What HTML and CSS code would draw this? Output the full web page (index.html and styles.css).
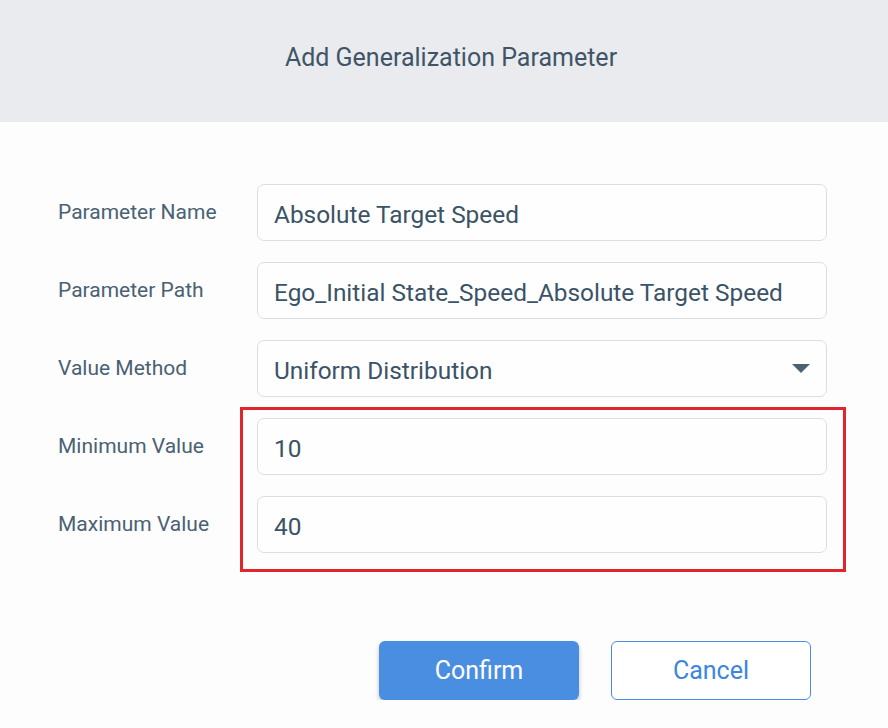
FILE: index.html
```html
<!DOCTYPE html>
<html lang="en">
<head>
  <meta charset="UTF-8">
  <meta name="viewport" content="width=device-width, initial-scale=1.0">
  <title>Add Generalization Parameter</title>
  <link rel="stylesheet" href="styles.css">
</head>
<body>

<div class="dialog">
  <header class="dialog-header">
    <h1>Add Generalization Parameter</h1>
  </header>

  <form class="param-form">
    <div class="row">
      <label for="paramName">Parameter Name</label>
      <input type="text" id="paramName" class="field" value="Absolute Target Speed">
    </div>

    <div class="row">
      <label for="paramPath">Parameter Path</label>
      <input type="text" id="paramPath" class="field" value="Ego_Initial State_Speed_Absolute Target Speed">
    </div>

    <div class="row">
      <label>Value Method</label>
      <div class="field select">
        <span>Uniform Distribution</span>
        <svg class="caret" width="18" height="9" viewBox="0 0 18 9">
          <path d="M0 0 L18 0 L9 9 Z" fill="#4c6273"/>
        </svg>
      </div>
    </div>

    <!-- range fields, outlined in red -->
    <div class="range-group">
      <div class="row">
        <label for="minValue">Minimum Value</label>
        <input type="text" id="minValue" class="field" value="10">
      </div>
      <div class="row">
        <label for="maxValue">Maximum Value</label>
        <input type="text" id="maxValue" class="field" value="40">
      </div>
    </div>

    <div class="actions">
      <button type="button" class="btn btn-primary">Confirm</button>
      <button type="button" class="btn btn-outline">Cancel</button>
    </div>
  </form>
</div>

</body>
</html>
```

FILE: styles.css
```css
body {
  font-family: Roboto, 'Liberation Sans', sans-serif;
  background: #fdfdfd;
  color: #3d5567;
  margin: 0;
  padding: 0;
}
.dialog-header {
  height: 122px;
  background: #e9ebee;
  display: flex;
  align-items: center;
  justify-content: center;
  padding-left: 14px;
}
.dialog-header h1 {
  margin: 0;
  font-size: 25px;
  font-weight: 400;
  color: #3f5567;
  transform: translateY(-4px);
}
.param-form {
  padding: 62px 0 0 58px;
  display: flex;
  flex-direction: column;
  gap: 21px;
}
.row {
  display: flex;
  align-items: center;
}
.row label {
  width: 199px;
  font-size: 21px;
  color: #4a6173;
  transform: translateY(-1px);
}
.field {
  box-sizing: border-box;
  width: 570px;
  height: 57px;
  padding: 4px 16px 0;
  border: 1.5px solid #dcdfe2;
  border-radius: 7px;
  background: #fefefe;
  font-family: inherit;
  font-size: 24.4px;
  color: #3b5366;
  outline: none;
}
.select {
  display: flex;
  align-items: center;
  justify-content: space-between;
  padding-right: 16px;
}
.caret {
  margin-top: -4px;
}
.range-group {
  position: relative;
  align-self: flex-start;
  display: flex;
  flex-direction: column;
  gap: 21px;
}
.range-group::after {
  content: '';
  position: absolute;
  top: -11px;
  bottom: -19px;
  left: 182px;
  right: -19px;
  border: 3px solid #e2242c;
  pointer-events: none;
}
.actions {
  display: flex;
  justify-content: flex-end;
  gap: 32px;
  margin-top: 67px;
  padding-right: 77px;
}
.btn {
  width: 200px;
  height: 59px;
  border-radius: 6px;
  font-family: inherit;
  font-size: 25px;
  cursor: pointer;
}
.btn-primary {
  background: #4a8ee2;
  color: #fff;
  border: none;
  box-shadow: 0 3px 4px rgba(0, 0, 0, 0.25);
}
.btn-outline {
  background: #fff;
  color: #3b86e0;
  border: 1.5px solid #4a8ee2;
}
```
